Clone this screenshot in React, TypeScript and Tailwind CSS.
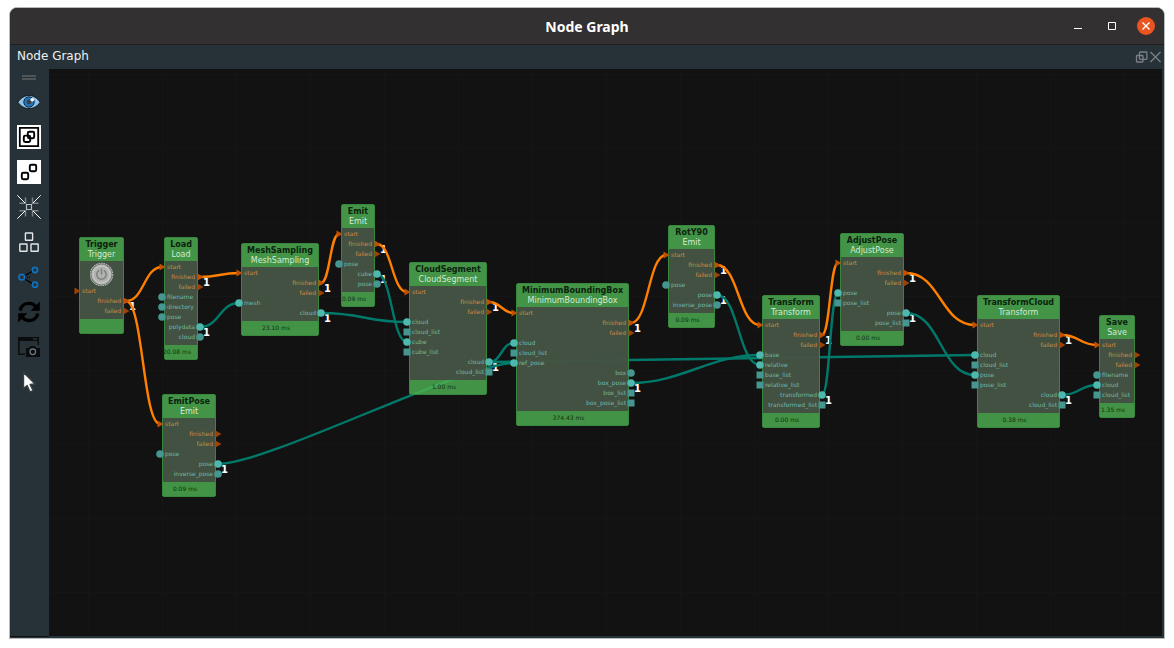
import { ReactNode } from "react";
import clsx from "clsx";

type Side = "in" | "out";
type Shape = "event" | "slot" | "multi";

interface Port {
  label: string;
  side: Side;
  shape: Shape;
  linked?: boolean;
  count?: boolean;
}

interface GraphNode {
  id: string;
  title: string;
  type: string;
  x: number;
  y: number;
  width: number;
  time?: string;
  power?: boolean;
  ports: Port[];
}

const HEADER = 24;
const ROW = 10;
const POWER = 24;

const port = (side: Side, shape: Shape, label: string, flags = ""): Port => ({
  label,
  side,
  shape,
  linked: flags !== "",
  count: flags === "count",
});

// start / finished / failed come first on every node
const events = (start = "linked", finished = "count"): Port[] => [
  port("in", "event", "start", start),
  port("out", "event", "finished", finished),
  port("out", "event", "failed"),
];

const NODES: GraphNode[] = [
  { id: "trigger", title: "Trigger", type: "Trigger", x: 30, y: 168, width: 45, power: true, ports: events("") },
  {
    id: "load", title: "Load", type: "Load", x: 115, y: 168, width: 34, time: "20.08 ms",
    ports: [
      ...events(),
      port("in", "slot", "filename"),
      port("in", "slot", "directory"),
      port("in", "slot", "pose"),
      port("out", "slot", "polydata", "count"),
      port("out", "slot", "cloud"),
    ],
  },
  {
    id: "mesh", title: "MeshSampling", type: "MeshSampling", x: 192, y: 174, width: 78, time: "23.10 ms",
    ports: [...events(), port("in", "slot", "mesh", "linked"), port("out", "slot", "cloud", "count")],
  },
  {
    id: "emit", title: "Emit", type: "Emit", x: 292, y: 135, width: 34, time: "0.09 ms",
    ports: [...events(), port("in", "slot", "pose"), port("out", "slot", "cube", "count"), port("out", "slot", "pose")],
  },
  {
    id: "segment", title: "CloudSegment", type: "CloudSegment", x: 360, y: 193, width: 78, time: "1.00 ms",
    ports: [
      ...events(),
      port("in", "slot", "cloud", "linked"),
      port("in", "multi", "cloud_list"),
      port("in", "slot", "cube", "linked"),
      port("in", "multi", "cube_list"),
      port("out", "slot", "cloud", "count"),
      port("out", "multi", "cloud_list"),
    ],
  },
  {
    id: "bbox", title: "MinimumBoundingBox", type: "MinimumBoundingBox", x: 467, y: 214, width: 113, time: "374.43 ms",
    ports: [
      ...events(),
      port("in", "slot", "cloud", "linked"),
      port("in", "multi", "cloud_list"),
      port("in", "slot", "ref_pose", "linked"),
      port("out", "slot", "box"),
      port("out", "slot", "box_pose", "count"),
      port("out", "multi", "box_list"),
      port("out", "multi", "box_pose_list"),
    ],
  },
  {
    id: "rot", title: "RotY90", type: "Emit", x: 619, y: 156, width: 47, time: "0.09 ms",
    ports: [...events(), port("in", "slot", "pose"), port("out", "slot", "pose", "count"), port("out", "slot", "inverse_pose")],
  },
  {
    id: "transform", title: "Transform", type: "Transform", x: 713, y: 226, width: 58, time: "0.00 ms",
    ports: [
      ...events(),
      port("in", "slot", "base", "linked"),
      port("in", "slot", "relative", "linked"),
      port("in", "multi", "base_list"),
      port("in", "multi", "relative_list"),
      port("out", "slot", "transformed", "count"),
      port("out", "multi", "transformed_list"),
    ],
  },
  {
    id: "adjust", title: "AdjustPose", type: "AdjustPose", x: 791, y: 164, width: 64, time: "0.00 ms",
    ports: [
      ...events(),
      port("in", "slot", "pose", "linked"),
      port("in", "multi", "pose_list"),
      port("out", "slot", "pose", "count"),
      port("out", "multi", "pose_list"),
    ],
  },
  {
    id: "tcloud", title: "TransformCloud", type: "Transform", x: 928, y: 226, width: 83, time: "0.38 ms",
    ports: [
      ...events(),
      port("in", "slot", "cloud", "linked"),
      port("in", "multi", "cloud_list"),
      port("in", "slot", "pose", "linked"),
      port("in", "multi", "pose_list"),
      port("out", "slot", "cloud", "count"),
      port("out", "multi", "cloud_list"),
    ],
  },
  {
    id: "save", title: "Save", type: "Save", x: 1050, y: 246, width: 36, time: "1.35 ms",
    ports: [...events("linked", ""), port("in", "slot", "filename"), port("in", "slot", "cloud", "linked"), port("in", "multi", "cloud_list")],
  },
  {
    id: "emitpose", title: "EmitPose", type: "Emit", x: 113, y: 325, width: 54, time: "0.09 ms",
    ports: [...events("linked", ""), port("in", "slot", "pose"), port("out", "slot", "pose", "count"), port("out", "slot", "inverse_pose")],
  },
];

// [from node, output, to node, input]
const EDGES: [string, string, string, string][] = [
  ["trigger", "finished", "load", "start"],
  ["trigger", "finished", "emitpose", "start"],
  ["load", "finished", "mesh", "start"],
  ["load", "polydata", "mesh", "mesh"],
  ["mesh", "finished", "emit", "start"],
  ["mesh", "cloud", "segment", "cloud"],
  ["emit", "finished", "segment", "start"],
  ["emit", "cube", "segment", "cube"],
  ["segment", "finished", "bbox", "start"],
  ["segment", "cloud", "bbox", "cloud"],
  ["segment", "cloud", "tcloud", "cloud"],
  ["emitpose", "pose", "bbox", "ref_pose"],
  ["bbox", "finished", "rot", "start"],
  ["bbox", "box_pose", "transform", "base"],
  ["rot", "finished", "transform", "start"],
  ["rot", "pose", "transform", "relative"],
  ["transform", "finished", "adjust", "start"],
  ["transform", "transformed", "adjust", "pose"],
  ["adjust", "finished", "tcloud", "start"],
  ["adjust", "pose", "tcloud", "pose"],
  ["tcloud", "finished", "save", "start"],
  ["tcloud", "cloud", "save", "cloud"],
];

function portPosition(node: GraphNode, index: number) {
  const top = node.y + HEADER + (node.power ? POWER : 0) + 1;
  return {
    x: node.ports[index].side === "in" ? node.x - 2 : node.x + node.width + 2,
    y: top + index * ROW + ROW / 2,
  };
}

function anchor(id: string, side: Side, label: string) {
  const node = NODES.find((n) => n.id === id)!;
  return portPosition(node, node.ports.findIndex((p) => p.side === side && p.label === label));
}

function edgePath([from, output, to, input]: [string, string, string, string]) {
  const a = anchor(from, "out", output);
  const b = anchor(to, "in", input);
  const bend = Math.min((b.x - a.x) / 2, 50);
  return `M${a.x} ${a.y}C${a.x + bend} ${a.y} ${b.x - bend} ${b.y} ${b.x} ${b.y}`;
}

function PortShape({ shape, linked }: { shape: Shape; linked?: boolean }) {
  const teal = linked ? "#4db8ac" : "#44968f";
  return (
    <svg width="8" height="8" viewBox="0 0 8 8" className="shrink-0">
      {shape === "event" && <path d="M1.5 .5L7.5 4L1.5 7.5z" fill={linked ? "#c05000" : "#9c4205"} />}
      {shape === "slot" && <circle cx="4" cy="4" r="3.8" fill={teal} />}
      {shape === "multi" && <rect x=".5" y=".5" width="7" height="7" fill={teal} />}
    </svg>
  );
}

function PortRow({ port }: { port: Port }) {
  return (
    <li
      className={clsx(
        "flex h-[10px] items-center gap-px text-[6px] leading-[10px] whitespace-nowrap",
        port.side === "in" ? "-ml-[7px]" : "-mr-[7px] flex-row-reverse",
        port.shape === "event" ? "text-[#c78d45]" : "text-[#72b8a9]",
      )}
    >
      <PortShape shape={port.shape} linked={port.linked} />
      <span>{port.label}</span>
    </li>
  );
}

function NodeCard({ node }: { node: GraphNode }) {
  return (
    <article
      className="absolute flex flex-col rounded-[2px] border border-[#37873c]"
      style={{ left: node.x, top: node.y, width: node.width }}
    >
      <header className="flex h-[23px] flex-col items-center bg-[#439446] pt-[2px] text-[8px] leading-[10px] whitespace-nowrap">
        <h2 className="font-bold text-[#0b220d]">{node.title}</h2>
        <p className="text-[#d5ead5]">{node.type}</p>
      </header>
      <div className="bg-[#445444]/97 pt-px pb-[3px]">
        {node.power && (
          <button aria-label="Trigger" className="mx-auto block size-6">
            <svg viewBox="0 0 24 24" fill="none">
              <circle cx="11.5" cy="12.5" r="11.3" fill="#777b77" stroke="#d0d2d0" strokeDasharray="1.5 1" />
              <circle cx="11.5" cy="12.5" r="10" fill="#b9bbb8" />
              <circle cx="11.5" cy="12.5" r="8.4" fill="#b0b2af" stroke="#c9cbc8" />
              <path d="M8.7 8.7a4.7 4.7 0 105.6 0M11.5 7v5" stroke="#7d807d" strokeWidth="1.5" strokeLinecap="round" />
            </svg>
          </button>
        )}
        <ul>
          {node.ports.map((p) => (
            <PortRow key={p.side + p.label} port={p} />
          ))}
        </ul>
      </div>
      <footer className="flex h-[14px] justify-center bg-[#4fb453]/80 pr-2 text-[6px] leading-[13px] whitespace-nowrap text-[#0f3212]">
        {node.time}
      </footer>
    </article>
  );
}

function Canvas() {
  return (
    <main className="relative min-w-0 flex-1 overflow-hidden bg-[#121212] bg-[linear-gradient(#151515_1px,transparent_1px),linear-gradient(90deg,#151515_1px,transparent_1px)] bg-[size:74px_74px] bg-[position:39px_5px]">
      {NODES.flatMap((node) =>
        node.ports.map((p, i) => {
          if (!p.count) return null;
          const { x, y } = portPosition(node, i);
          return (
            <span
              key={node.id + p.label}
              className="absolute text-[10px] leading-[10px] font-bold text-white"
              style={{ left: x + 3, top: y + 1 }}
            >
              1
            </span>
          );
        }),
      )}
      <svg className="absolute inset-0 size-full" fill="none" strokeWidth="2.4">
        {EDGES.map((edge) => (
          <path key={edge.join()} d={edgePath(edge)} stroke={edge[3] === "start" ? "#ff8000" : "#00796b"} />
        ))}
      </svg>
      {NODES.map((node) => (
        <NodeCard key={node.id} node={node} />
      ))}
    </main>
  );
}

function ToolButton({ label, children }: { label: string; children: ReactNode }) {
  return (
    <button aria-label={label} className="size-6">
      <svg viewBox="0 0 24 24" fill="none" className="size-6">
        {children}
      </svg>
    </button>
  );
}

function Toolbar() {
  return (
    <nav className="flex w-[39px] shrink-0 flex-col items-start gap-[11px] bg-[#273238] pl-[7px] shadow-[0_1px_#121212]">
      <div className="mt-[6px] -mb-px ml-[5px] flex h-[5px] w-[14px] flex-col justify-between">
        <hr className="border-t-2 border-[#505557]" />
        <hr className="border-t-2 border-[#505557]" />
      </div>
      <ToolButton label="Show">
        <path d="M.8 12.2C4 7.5 8 5.4 12 5.4s8 2.1 11.2 6.8C20 16.8 16 18.6 12 18.6S4 16.8.8 12.2z" fill="#8fc0e8" stroke="#101820" strokeWidth="1" />
        <circle cx="12" cy="12" r="5.2" fill="#2377bd" stroke="#10283c" />
        <circle cx="12" cy="12" r="2.4" fill="#35414a" />
        <circle cx="15.2" cy="9.8" r="1.8" fill="#fff" />
      </ToolButton>
      <ToolButton label="Group nodes">
        <path d="M0 0h24v24H0z" fill="#fff" />
        <path d="M2.8 2.8h18.4v18.4H2.8z" stroke="#000" strokeWidth="1.8" />
        <rect x="6.8" y="10.6" width="6.4" height="6.4" rx="1.4" stroke="#000" strokeWidth="1.9" />
        <rect x="10.8" y="6.8" width="6.4" height="6.4" rx="1.4" stroke="#000" strokeWidth="1.9" />
      </ToolButton>
      <ToolButton label="Ungroup nodes">
        <path d="M0 0h24v24H0z" fill="#fff" />
        <rect x="4.8" y="12.8" width="6.4" height="6.4" rx="1.4" stroke="#000" strokeWidth="1.9" />
        <rect x="12.8" y="4.8" width="6.4" height="6.4" rx="1.4" stroke="#000" strokeWidth="1.9" />
      </ToolButton>
      <ToolButton label="Fit view">
        <path d="M2.5 8.3h6V2.5M21.5 8.3h-6V2.5M2.5 15.7h6v5.8M21.5 15.7h-6v5.8" stroke="#7d8386" strokeWidth="1.5" />
        <path d="M.3.3L8 8M23.7.3L16 8M.3 23.7L8 16M23.7 23.7L16 16" stroke="#fff" />
        <path d="M9.5 9.5h5v5h-5z" stroke="#b9bdbf" strokeWidth="1.2" />
      </ToolButton>
      <ToolButton label="Arrange nodes">
        <g stroke="#e4e6e7" strokeWidth="1.4">
          <rect x="8.4" y="3" width="7.2" height="7.2" rx=".5" />
          <rect x="2.8" y="14" width="7.2" height="7.2" rx=".5" />
          <rect x="14" y="14" width="7.2" height="7.2" rx=".5" />
        </g>
      </ToolButton>
      <ToolButton label="Connections">
        <path d="M7 11L16 6M7 13.5L16 19" stroke="#000" strokeWidth="1.4" />
        <path d="M8 12.3h6" stroke="#000" strokeDasharray="1 1" />
        <g stroke="#0b74c4" strokeWidth="1.6">
          <circle cx="4.8" cy="12.2" r="2.8" />
          <circle cx="18" cy="5" r="2.6" />
          <circle cx="18" cy="19.7" r="2.6" />
        </g>
      </ToolButton>
      <ToolButton label="Refresh">
        <path d="M3.2 10.5C4 5.8 8 3.4 12 3.4c2.8 0 4.8 1 6.5 2.9M20.8 13.5c-.8 4.7-4.8 7.1-8.8 7.1-2.8 0-4.8-1-6.5-2.9" stroke="#000" strokeWidth="3.4" />
        <path d="M22.8 1.6v9.2h-9.2zM1.2 22.4v-9.2h9.2z" fill="#000" />
      </ToolButton>
      <ToolButton label="Screenshot">
        <path d="M1 2h21v8h-1.4V6H2.6v12.5H8V20H1z" fill="#0a0c0d" />
        <path d="M16.5 4h3" stroke="#7c8386" strokeDasharray="1 1" />
        <path d="M9 13h3l1-2h5l1 2h4v9H9z" fill="#0a0c0d" />
        <circle cx="15.8" cy="16.8" r="2.8" stroke="#68737a" strokeWidth="1.3" />
      </ToolButton>
      <ToolButton label="Select">
        <path d="M6.5 2.5v16l3.6-3 3 6.5 3-1.4-3-6.2 5-.4z" fill="#fff" stroke="#3a3f42" strokeWidth="1.4" strokeLinejoin="round" />
      </ToolButton>
    </nav>
  );
}

export default function App() {
  return (
    <div className="flex min-h-screen bg-white px-[9px] pt-[7px] pb-[9px] font-['DejaVu_Sans',sans-serif]">
      <div className="flex min-w-0 flex-1 flex-col overflow-hidden rounded-t-lg border border-[#b8bbbd] bg-[#273238]">
        <div className="flex h-[37px] items-center border-b border-[#1f1d1e] bg-[#333031] px-[9px]">
          <div className="flex-1" />
          <h1 className="pt-px font-['Noto_Sans',sans-serif] text-[14px] leading-5 font-bold text-white">Node Graph</h1>
          <div className="flex flex-1 items-center justify-end gap-[17px]">
            <button aria-label="Minimize" className="size-4">
              <svg viewBox="0 0 16 16">
                <path d="M3 10h8v1H3z" fill="#fff" />
              </svg>
            </button>
            <button aria-label="Maximize" className="size-4">
              <svg viewBox="0 0 16 16" fill="none">
                <path d="M4.5 4.5h7v7h-7z" stroke="#fff" />
              </svg>
            </button>
            <button aria-label="Close" className="size-[18px] rounded-full bg-[#e95420]">
              <svg viewBox="0 0 18 18" fill="none">
                <path d="M5.5 5.5l7 7M12.5 5.5l-7 7" stroke="#fff" strokeWidth="1.4" />
              </svg>
            </button>
          </div>
        </div>

        <div className="flex h-6 items-center justify-between pr-px pb-[2px] pl-[7px]">
          <h2 className="text-[12px] leading-4 text-[#eceff0]">Node Graph</h2>
          <div className="flex items-center pt-px">
            <button aria-label="Float" className="size-[14px]">
              <svg viewBox="0 0 14 14" fill="none" stroke="#7b8184" strokeWidth="1.3">
                <rect x="4.5" y="2" width="7.4" height="7.4" rx=".8" />
                <rect x="1.5" y="5.5" width="6.5" height="6.5" rx=".8" />
              </svg>
            </button>
            <button aria-label="Close panel" className="size-[14px]">
              <svg viewBox="0 0 14 14" fill="none" stroke="#7b8184" strokeWidth="1.3">
                <path d="M1.5 2l10 10M11.5 2l-10 10" />
              </svg>
            </button>
          </div>
        </div>

        <div className="flex flex-1 pr-[2px] pb-[2px]">
          <Toolbar />
          <Canvas />
        </div>
      </div>
    </div>
  );
}
